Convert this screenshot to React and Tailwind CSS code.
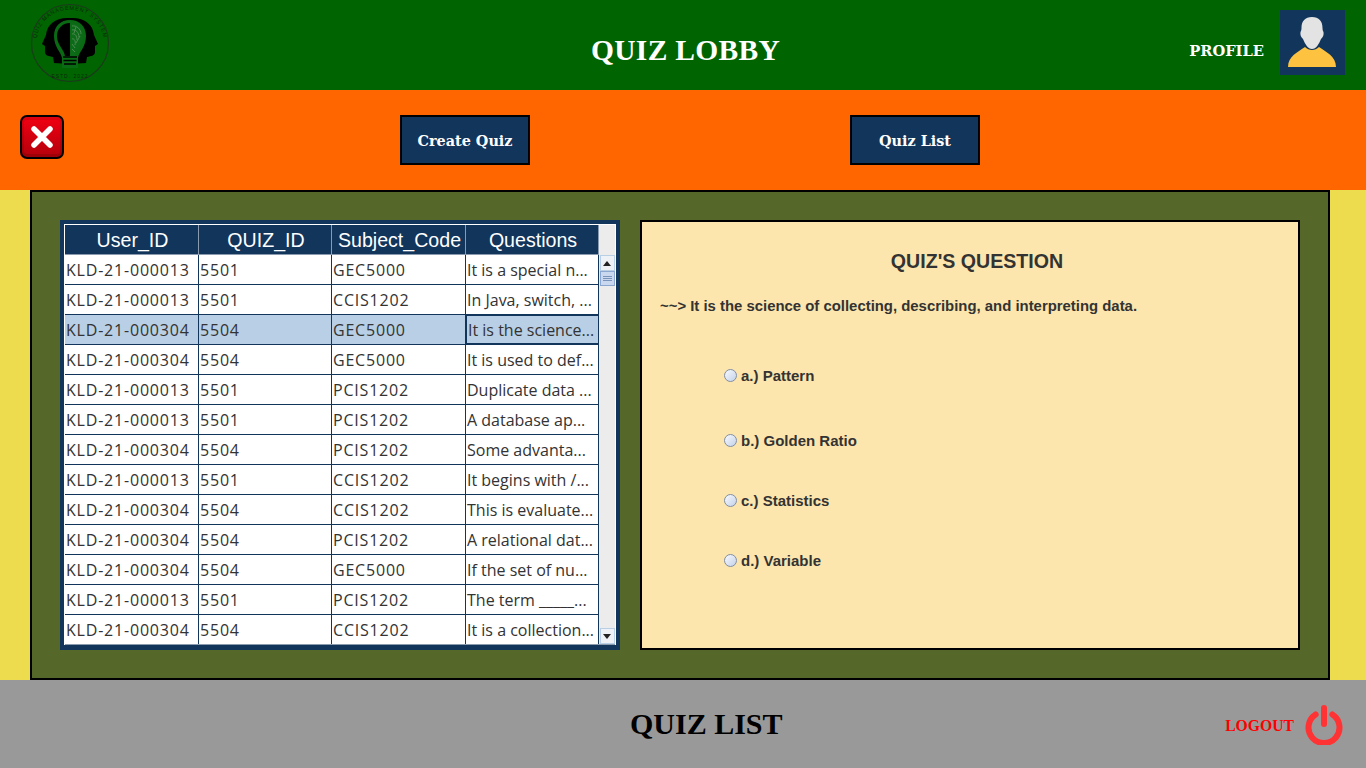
import React from 'react';

const rows = [
  ['KLD-21-000013', '5501', 'GEC5000', 'It is a special n...'],
  ['KLD-21-000013', '5501', 'CCIS1202', 'In Java, switch, ...'],
  ['KLD-21-000304', '5504', 'GEC5000', 'It is the science...'],
  ['KLD-21-000304', '5504', 'GEC5000', 'It is used to def...'],
  ['KLD-21-000013', '5501', 'PCIS1202', 'Duplicate data ...'],
  ['KLD-21-000013', '5501', 'PCIS1202', 'A database ap...'],
  ['KLD-21-000304', '5504', 'PCIS1202', 'Some advanta...'],
  ['KLD-21-000013', '5501', 'CCIS1202', 'It begins with /...'],
  ['KLD-21-000304', '5504', 'CCIS1202', 'This is evaluate...'],
  ['KLD-21-000304', '5504', 'PCIS1202', 'A relational dat...'],
  ['KLD-21-000304', '5504', 'GEC5000', 'If the set of nu...'],
  ['KLD-21-000013', '5501', 'PCIS1202', 'The term _____...'],
  ['KLD-21-000304', '5504', 'CCIS1202', 'It is a collection...'],
];

const headers = ['User_ID', 'QUIZ_ID', 'Subject_Code', 'Questions'];
const widths = ['w-[134px]', 'w-[133px]', 'w-[134px]', 'w-[133px]'];

const Logo = () => (
  <svg width="82" height="82" viewBox="0 0 82 82">
    <defs>
      <path id="topArc" d="M8 50 A34 34 0 1 1 74 50" />
    </defs>
    <circle cx="41" cy="41" r="38.5" fill="none" stroke="#1c3a1c" strokeWidth="1.2" />
    <text fontSize="5.5" fill="#0b2a0b" fontFamily="Liberation Sans, sans-serif" letterSpacing="0.8" textAnchor="middle">
      <textPath href="#topArc" startOffset="50%">QUIZ MANAGEMENT SYSTEM</textPath>
    </text>
    <text x="41" y="76" textAnchor="middle" fontSize="5" fill="#0b2a0b" fontFamily="Liberation Sans, sans-serif" letterSpacing="1">ESTD. 2022</text>
    {/* two faces */}
    <path d="M41 16 C27 15 18 22 17 33 L13 42 L16 44 L16 50 C16 54 20 54 24 55 L25 61 L41 62 Z" fill="#000" />
    <path d="M41 16 C55 15 64 22 65 33 L69 42 L66 44 L66 50 C66 54 62 54 58 55 L57 61 L41 62 Z" fill="#000" />
    {/* bulb */}
    <path d="M33 66 L33 56 C32 50 25 45 25 34 C25 24 32 18 41 18 C50 18 57 24 57 34 C57 45 50 50 49 56 L49 66 Z" fill="#0a6a14" />
    <path d="M41 21 C33 21 28 27 28 34 C28 43 35 47 36 54 L41 54 Z" fill="#000" />
    <path d="M42 21 C50 21 54 27 54 34 C54 43 47 47 46 54 L42 54 Z" fill="#0d6a18" />
    <path d="M43 24 C47 23 52 27 52 32 M43 28 C46 27 50 30 50 35 M43 32 C46 31 48 34 48 38 M43 37 C45 36 47 39 46 43 M43 42 L46 46 M47 25 L45 31 M51 34 L47 41 M43 47 L46 50" fill="none" stroke="#5a9060" strokeWidth="0.8" />
    <path d="M34 55 H48 M34.5 58.5 H47.5 M35 62 H47" stroke="#000" strokeWidth="1.5" />
  </svg>
);

const CloseButton = () => (
  <div className="w-[44px] h-[44px] rounded-[7px] border-2 border-black bg-gradient-to-b from-[#e0000f] to-[#9c0008] flex items-center justify-center">
    <div className="w-[36px] h-[34px] rounded-[3px] bg-gradient-to-b from-[#ec0012] to-[#b8000c] flex items-center justify-center">
      <svg width="28" height="28" viewBox="0 0 28 28">
        <path d="M6 6 L22 22 M22 6 L6 22" stroke="#fff" strokeWidth="5.5" strokeLinecap="round" />
      </svg>
    </div>
  </div>
);

const Avatar = () => (
  <svg width="65" height="65" viewBox="0 0 65 65" className="bg-[#12355b] mt-[10px]">
    <path d="M8 57 C8 46 18 42 25 37 C29 41 35 41 39 37 C46 42 56 46 56 57 Z" fill="#fcc240" />
    <path d="M32 7 C25 7 21.5 11 21.5 18 C21.5 20 21 21 20.5 22 C20 25 21 27 23 29 C25 34 28 39 32 39 C36 39 39 34 41 29 C43 27 44 25 43.5 22 C43 21 42.5 20 42.5 18 C42.5 11 39 7 32 7 Z" fill="#e3e3e3" />
  </svg>
);

const Radio = ({ label }) => (
  <div className="flex items-center h-[20px]">
    <span className="w-[13px] h-[13px] rounded-full border border-[#7f8fa8] bg-gradient-to-br from-[#f8f9fd] to-[#c4d2ea] mt-[-2px]" />
    <span className="ml-[4px] text-[15px] font-bold text-[#333333]">{label}</span>
  </div>
);

const NavButton = ({ label, className }) => (
  <button className={`w-[130px] h-[50px] pt-[2px] bg-[#12355b] border-2 border-black text-white text-[14.4px] font-bold font-['DejaVu_Serif',serif] ${className}`}>
    {label}
  </button>
);

const ScrollArrow = ({ d }) => (
  <div className="w-[15px] h-[16px] bg-[#eef1f6] border border-[#b8cfe5] flex items-center justify-center">
    <svg width="8" height="5" viewBox="0 0 8 5"><path d={d} fill="#222" /></svg>
  </div>
);

export default function App() {
  return (
    <div className="w-[1366px] h-[768px] overflow-hidden flex flex-col font-['Liberation_Sans',sans-serif]">
      <header className="h-[90px] shrink-0 bg-[#006400] flex items-start pl-[29px] pr-[21px]">
        <div className="w-[82px] mt-[2px]"><Logo /></div>
        <h1 className="ml-[480px] mt-[36px] text-[29.5px] leading-none font-bold text-white font-['Liberation_Serif',serif] tracking-[0.3px]">QUIZ LOBBY</h1>
        <span className="ml-auto mr-[16px] mt-[42px] text-[14.7px] leading-[18px] font-bold text-white font-['DejaVu_Serif',serif]">PROFILE</span>
        <Avatar />
      </header>

      <div className="h-[100px] shrink-0 bg-[#ff6600] flex items-start pl-[20px] pt-[25px]">
        <CloseButton />
        <NavButton label="Create Quiz" className="ml-[336px]" />
        <NavButton label="Quiz List" className="ml-[320px]" />
      </div>

      <main className="h-[490px] shrink-0 bg-[#eedc4f] px-[30px]">
        <div className="w-[1300px] h-full bg-[#56672a] border-2 border-black flex pl-[28px] pt-[28px] gap-[20px]">
          <div className="w-[560px] h-[430px] bg-[#12355b] p-[4px]">
            <div className="h-[421px] bg-[#ececec] border border-b-0 border-white flex overflow-hidden">
              <div className="w-[534px] shrink-0">
                <div className="flex h-[30px] bg-[#12355b] border-b border-[#8a9bb0]">
                  {headers.map((h, i) => (
                    <div key={h} className={`${widths[i]} border-r border-[#8a9bb0] flex items-center justify-center pt-[2px] pl-[2px] text-[19.6px] text-white`}>{h}</div>
                  ))}
                </div>
                {rows.map((r, idx) => (
                  <div key={idx} className={`flex h-[30px] border-b ${idx === 12 ? 'border-[#8a9bb0]' : 'border-[#12355b]'} ${idx === 2 ? 'bg-[#b8cfe5]' : 'bg-white'}`}>
                    {r.map((c, i) => (
                      <div key={i} className={`${widths[i]} border-r border-[#12355b] flex items-center pl-[1px] text-[16px] text-[#333333] whitespace-nowrap overflow-hidden font-['Open_Sans',sans-serif] ${i < 3 ? 'tracking-[0.8px]' : ''} ${idx === 2 && i === 3 ? 'border border-[#3a5f96]' : ''}`}>{c}</div>
                    ))}
                  </div>
                ))}
              </div>
              <div className="flex-1 flex flex-col items-center pt-[30px] border-b border-[#8a9bb0]">
                <ScrollArrow d="M4 0 L8 5 H0 Z" />
                <div className="w-[15px] h-[15px] bg-[#c9d8ee] border border-[#8ba6cf] flex flex-col items-center justify-center gap-[1px]">
                  <span className="w-[9px] h-px bg-[#7a93bb]" />
                  <span className="w-[9px] h-px bg-[#7a93bb]" />
                  <span className="w-[9px] h-px bg-[#7a93bb]" />
                </div>
                <div className="flex-1" />
                <ScrollArrow d="M0 0 H8 L4 5 Z" />
              </div>
            </div>
          </div>

          <section className="w-[660px] h-[430px] bg-[#fde6ad] border-2 border-black">
            <h2 className="mt-[27px] pl-[14px] text-center text-[19.6px] leading-[24px] font-bold text-[#333333]">QUIZ'S QUESTION</h2>
            <p className="mt-[23px] ml-[18px] text-[14.9px] leading-[20px] font-bold text-[#333333]">~~&gt; It is the science of collecting, describing, and interpreting data.</p>
            <div className="mt-[50px] ml-[82px]">
              <Radio label="a.) Pattern" />
              <div className="h-[45px]" />
              <Radio label="b.) Golden Ratio" />
              <div className="h-[40px]" />
              <Radio label="c.) Statistics" />
              <div className="h-[40px]" />
              <Radio label="d.) Variable" />
            </div>
          </section>
        </div>
      </main>

      <footer className="h-[88px] shrink-0 bg-[#999999] flex items-center pr-[23px]">
        <h2 className="ml-[630px] text-[30px] leading-none font-bold text-black font-['Liberation_Serif',serif]">QUIZ LIST</h2>
        <span className="ml-auto mr-[11px] mt-[4px] text-[15.7px] font-bold text-[#ff0000] font-['Liberation_Serif',serif]">LOGOUT</span>
        <svg width="38" height="40" viewBox="0 0 38 40" className="mt-[2px]">
          <path d="M10.6 9.5 A15.5 15.5 0 1 0 27.4 9.5" fill="none" stroke="#ff3333" strokeWidth="6" strokeLinecap="round" />
          <path d="M19 3 V19" stroke="#ff3333" strokeWidth="6" strokeLinecap="round" />
        </svg>
      </footer>
    </div>
  );
}
